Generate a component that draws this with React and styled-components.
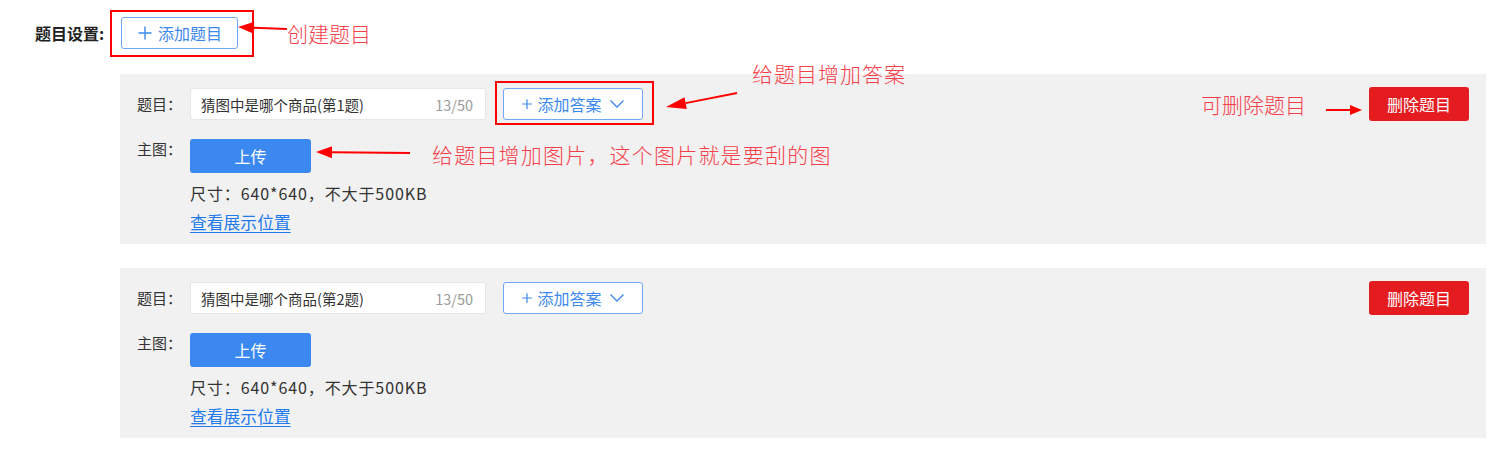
import React from "react";
import styled, { createGlobalStyle } from "styled-components";

const GlobalStyle = createGlobalStyle`
  html, body {
    margin: 0;
    padding: 0;
    background: #ffffff;
  }
  body {
    font-family: "Noto Sans CJK SC", "Noto Sans", sans-serif;
    color: #333333;
  }
  * { box-sizing: border-box; }
`;

const Page = styled.div`
  position: relative;
  width: 1500px;
  height: 454px;
  padding: 17px 14px 0 35px;
  overflow: hidden;
`;

const TopRow = styled.div`
  display: flex;
  align-items: center;
  gap: 13px;
  height: 32px;
`;

const SectionLabel = styled.span`
  font-size: 16px;
  font-weight: 700;
  color: #222222;
  line-height: 32px;
  width: 73px;
  white-space: nowrap;
`;

const OutlineButton = styled.button`
  display: inline-flex;
  align-items: center;
  justify-content: center;
  gap: ${(p) => p.$gap || 5}px;
  width: ${(p) => p.$w}px;
  height: 32px;
  padding: 0;
  border: 1px solid #70a6f2;
  border-radius: 3px;
  background: #ffffff;
  color: #3d89ee;
  font-family: inherit;
  font-size: 16px;
  line-height: 1;
  cursor: pointer;
`;

const List = styled.div`
  display: flex;
  flex-direction: column;
  gap: 24px;
  margin: 25px 0 0 85px;
`;

const Panel = styled.section`
  background: #f1f1f1;
  padding: 13px 17px 7px 17px;
`;

const FieldRow = styled.div`
  display: flex;
  align-items: ${(p) => (p.$top ? "flex-start" : "center")};
  & + & {
    margin-top: 18px;
  }
`;

const Label = styled.span`
  width: 53px;
  flex: none;
  font-size: 15px;
  line-height: 20px;
  color: #333333;
`;

const InputBox = styled.div`
  display: flex;
  align-items: center;
  justify-content: space-between;
  width: 296px;
  height: 32px;
  padding: 0 12px 0 10px;
  background: #ffffff;
  border: 1px solid #e6e6e6;
  border-radius: 2px;
  margin-right: 17px;
`;

const InputText = styled.span`
  font-size: 14.5px;
  color: #333333;
  white-space: nowrap;
`;

const Counter = styled.span`
  font-size: 14.5px;
  color: #9a9a9a;
`;

const DeleteButton = styled.button`
  margin-left: auto;
  width: 100px;
  height: 34px;
  border: none;
  border-radius: 3px;
  background: #e51c1f;
  color: #ffffff;
  font-family: inherit;
  font-size: 16px;
  cursor: pointer;
`;

const UploadColumn = styled.div`
  display: flex;
  flex-direction: column;
  align-items: flex-start;
`;

const UploadButton = styled.button`
  width: 121px;
  height: 34px;
  border: none;
  border-radius: 3px;
  background: #3a88f0;
  color: #ffffff;
  font-family: inherit;
  font-size: 16px;
  margin-bottom: 6px;
  cursor: pointer;
`;

const Hint = styled.div`
  font-size: 16px;
  line-height: 29px;
  color: #333333;
  letter-spacing: 0.9px;
`;

const Link = styled.a`
  font-size: 16.8px;
  line-height: 29px;
  color: #2279ec;
  text-decoration: underline;
  text-underline-offset: 3px;
  cursor: pointer;
`;

/* ---------- annotation overlay ---------- */

const Overlay = styled.div`
  position: absolute;
  inset: 0;
  pointer-events: none;
`;

const OverlaySvg = styled.svg`
  position: absolute;
  left: 0;
  top: 0;
`;

const Note = styled.span`
  position: absolute;
  left: ${(p) => p.$x}px;
  top: ${(p) => p.$y}px;
  font-size: ${(p) => p.$size || 21}px;
  font-weight: 300;
  line-height: 1;
  color: #f5404a;
  white-space: nowrap;
  letter-spacing: ${(p) => p.$ls || 0}px;
`;

const Plus = ({ size, stroke = 1.4 }) => (
  <svg width={size} height={size} viewBox="0 0 16 16" aria-hidden="true">
    <path d="M8 1.5V14.5M1.5 8H14.5" stroke="currentColor" strokeWidth={stroke} fill="none" />
  </svg>
);

const Chevron = () => (
  <svg width="16" height="10" viewBox="0 0 16 10" aria-hidden="true" style={{ marginLeft: 3 }}>
    <path d="M1.5 1.5L8 8L14.5 1.5" stroke="currentColor" strokeWidth="1.4" fill="none" />
  </svg>
);

const Arrow = ({ x1, y1, x2, y2, head = 16, half = 6 }) => {
  const dx = x2 - x1;
  const dy = y2 - y1;
  const len = Math.hypot(dx, dy);
  const ux = dx / len;
  const uy = dy / len;
  const bx = x2 - ux * head;
  const by = y2 - uy * head;
  const px = -uy * half;
  const py = ux * half;
  return (
    <g>
      <line x1={x1} y1={y1} x2={bx} y2={by} stroke="#f00" strokeWidth="2" />
      <polygon
        points={`${x2},${y2} ${bx + px},${by + py} ${bx - px},${by - py}`}
        fill="#f00"
      />
    </g>
  );
};

const questions = [
  { id: 1, title: "猜图中是哪个商品(第1题)" },
  { id: 2, title: "猜图中是哪个商品(第2题)" },
];

export default function App() {
  return (
    <>
      <GlobalStyle />
      <Page>
        <TopRow>
          <SectionLabel>题目设置:</SectionLabel>
          <OutlineButton $w={117}>
            <Plus size={16} />
            添加题目
          </OutlineButton>
        </TopRow>

        <List>
          {questions.map((q) => (
            <Panel key={q.id}>
              <FieldRow>
                <Label>题目：</Label>
                <InputBox>
                  <InputText>{q.title}</InputText>
                  <Counter>13/50</Counter>
                </InputBox>
                <OutlineButton $w={140} $gap={4}>
                  <Plus size={12} stroke={1.6} />
                  添加答案
                  <Chevron />
                </OutlineButton>
                <DeleteButton>删除题目</DeleteButton>
              </FieldRow>
              <FieldRow $top>
                <Label>主图：</Label>
                <UploadColumn>
                  <UploadButton>上传</UploadButton>
                  <Hint>尺寸：640*640，不大于500KB</Hint>
                  <Link>查看展示位置</Link>
                </UploadColumn>
              </FieldRow>
            </Panel>
          ))}
        </List>

        <Overlay>
          <OverlaySvg width="1500" height="454" viewBox="0 0 1500 454">
            <rect x="111" y="11" width="142" height="45" fill="none" stroke="#f00" strokeWidth="2" />
            <rect x="496" y="82" width="157" height="42" fill="none" stroke="#f00" strokeWidth="2" />
            <Arrow x1={287} y1={29} x2={238} y2={27} head={16} half={6} />
            <Arrow x1={737} y1={93} x2={666} y2={107} head={20} half={6} />
            <Arrow x1={410} y1={153} x2={316} y2={152} head={16} half={6} />
            <Arrow x1={1326} y1={110} x2={1362} y2={110} head={12} half={5} />
          </OverlaySvg>
          <Note $x={287} $y={23}>创建题目</Note>
          <Note $x={752} $y={63} $size={21} $ls={1}>给题目增加答案</Note>
          <Note $x={432} $y={144} $size={21} $ls={1.2}>给题目增加图片，这个图片就是要刮的图</Note>
          <Note $x={1201} $y={94} $size={21}>可删除题目</Note>
        </Overlay>
      </Page>
    </>
  );
}
